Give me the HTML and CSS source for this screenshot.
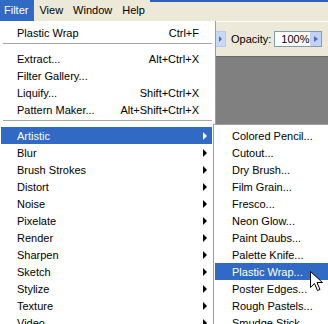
FILE: index.html
```html
<!DOCTYPE html>
<html lang="en">
<head>
    <meta charset="UTF-8">
    <title>Filter Menu</title>
    <link rel="stylesheet" href="styles.css">
</head>
<body>
    <div class="menubar">
        <div class="m first active">Filter</div>
        <div class="m">View</div>
        <div class="m">Window</div>
        <div class="m">Help</div>
        <div class="strip"></div>
    </div>

    <div class="toolbar">
        <span class="dd-btn"><span class="tri-small"></span></span>
        <span class="label">Opacity:</span>
        <span class="field">100%</span>
        <span class="field-btn"><span class="tri-blue"></span></span>
    </div>
    <div class="canvas"></div>

    <div class="menu main">
        <div class="item"><span>Plastic Wrap</span><span class="sc">Ctrl+F</span><span class="arr"></span></div>
        <div class="sep"></div>
        <div class="item"><span>Extract...</span><span class="sc">Alt+Ctrl+X</span><span class="arr"></span></div>
        <div class="item"><span>Filter Gallery...</span><span class="sc"></span><span class="arr"></span></div>
        <div class="item"><span>Liquify...</span><span class="sc">Shift+Ctrl+X</span><span class="arr"></span></div>
        <div class="item"><span>Pattern Maker...</span><span class="sc">Alt+Shift+Ctrl+X</span><span class="arr"></span></div>
        <div class="sep"></div>
        <div class="item active"><span>Artistic</span><span class="sc"></span><span class="arr"><i class="tri"></i></span></div>
        <div class="item"><span>Blur</span><span class="sc"></span><span class="arr"><i class="tri"></i></span></div>
        <div class="item"><span>Brush Strokes</span><span class="sc"></span><span class="arr"><i class="tri"></i></span></div>
        <div class="item"><span>Distort</span><span class="sc"></span><span class="arr"><i class="tri"></i></span></div>
        <div class="item"><span>Noise</span><span class="sc"></span><span class="arr"><i class="tri"></i></span></div>
        <div class="item"><span>Pixelate</span><span class="sc"></span><span class="arr"><i class="tri"></i></span></div>
        <div class="item"><span>Render</span><span class="sc"></span><span class="arr"><i class="tri"></i></span></div>
        <div class="item"><span>Sharpen</span><span class="sc"></span><span class="arr"><i class="tri"></i></span></div>
        <div class="item"><span>Sketch</span><span class="sc"></span><span class="arr"><i class="tri"></i></span></div>
        <div class="item"><span>Stylize</span><span class="sc"></span><span class="arr"><i class="tri"></i></span></div>
        <div class="item"><span>Texture</span><span class="sc"></span><span class="arr"><i class="tri"></i></span></div>
        <div class="item"><span>Video</span><span class="sc"></span><span class="arr"><i class="tri"></i></span></div>
    </div>

    <div class="menu sub">
        <div class="item">Colored Pencil...</div>
        <div class="item">Cutout...</div>
        <div class="item">Dry Brush...</div>
        <div class="item">Film Grain...</div>
        <div class="item">Fresco...</div>
        <div class="item">Neon Glow...</div>
        <div class="item">Paint Daubs...</div>
        <div class="item">Palette Knife...</div>
        <div class="item active">Plastic Wrap...</div>
        <div class="item">Poster Edges...</div>
        <div class="item">Rough Pastels...</div>
        <div class="item">Smudge Stick...</div>
    </div>

    <svg class="cursor" width="14" height="22" viewBox="0 0 14 22">
        <path d="M0.5 0.5 L0.5 16.5 L4.5 12.5 L7.5 19.5 L10 18.5 L7 11.5 L12.5 11.5 Z" fill="#fff" stroke="#000" stroke-width="1"/>
    </svg>
</body>
</html>
```

FILE: styles.css
```css
body {
    margin: 0;
    width: 328px;
    height: 324px;
    overflow: hidden;
    position: relative;
    background: #ece9d8;
    font-family: "Liberation Sans", Arial, sans-serif;
    font-size: 11px;
    color: #000;
}
.menubar {
    display: flex;
    height: 21px;
}
.menubar .m {
    padding: 0 5px;
    line-height: 21px;
}
.menubar .first { padding-left: 4px; padding-right: 6px; }
.menubar .active { background: #316ac5; color: #fff; }
.menubar .strip {
    flex: 1;
    border-top: 2px solid #2f5fb8;
}
.toolbar {
    height: 34px;
    border-top: 1px solid #fff;
    display: flex;
    align-items: center;
    padding-left: 215px;
}
.dd-btn {
    width: 9px;
    height: 14px;
    border: 1px solid #b4c8f0;
    background: #c8d8f8;
    display: flex;
    align-items: center;
    justify-content: center;
}
.tri-small {
    width: 0;
    height: 0;
    border-top: 3px solid transparent;
    border-bottom: 3px solid transparent;
    border-left: 3px solid #4d6fb0;
}
.label { margin-left: 5px; }
.field {
    margin-left: 3px;
    width: 29px;
    height: 14px;
    line-height: 14px;
    background: #fff;
    border: 1px solid #7f9db9;
    border-right: none;
    padding-left: 6px;
}
.field-btn {
    width: 11px;
    height: 14px;
    border: 1px solid #7f9db9;
    border-left: none;
    background: #c1d3fb;
    display: flex;
    align-items: center;
    justify-content: center;
}
.tri-blue {
    width: 0;
    height: 0;
    border-top: 3px solid transparent;
    border-bottom: 3px solid transparent;
    border-left: 4px solid #4d6fb0;
}
.canvas {
    height: 268px;
    background: #808080;
    border-top: 1px solid #6a6a6a;
}
.menu {
    position: absolute;
    background: #fff;
}
.menu.main {
    left: 0;
    top: 21px;
    width: 216px;
    height: 303px;
    padding-top: 3px;
    border-right: 1px solid #9d9d9d;
    box-sizing: border-box;
    overflow: hidden;
}
.menu.sub {
    left: 213px;
    top: 124px;
    width: 115px;
    height: 200px;
    padding-top: 2px;
    border: 1px solid #9d9d9d;
    border-right: none;
    border-bottom: none;
    box-sizing: border-box;
    overflow: hidden;
}
.item {
    display: flex;
    align-items: center;
    height: 17px;
    white-space: nowrap;
}
.main .item {
    margin: 0 3px 0 1px;
    padding-left: 16px;
}
.sub .item {
    margin-left: 1px;
    padding-left: 17px;
}
.item.active { background: #316ac5; color: #fff; }
.sc { margin-left: auto; }
.arr {
    width: 9px;
    padding-left: 4px;
    display: flex;
    align-items: center;
}
.tri {
    width: 0;
    height: 0;
    border-top: 4px solid transparent;
    border-bottom: 4px solid transparent;
    border-left: 4px solid #000;
}
.item.active .tri { border-left-color: #fff; }
.sep {
    height: 1px;
    background: #a6a6a6;
    margin: 2px 3px 6px 3px;
}
.cursor {
    position: absolute;
    left: 310px;
    top: 271px;
}
```
